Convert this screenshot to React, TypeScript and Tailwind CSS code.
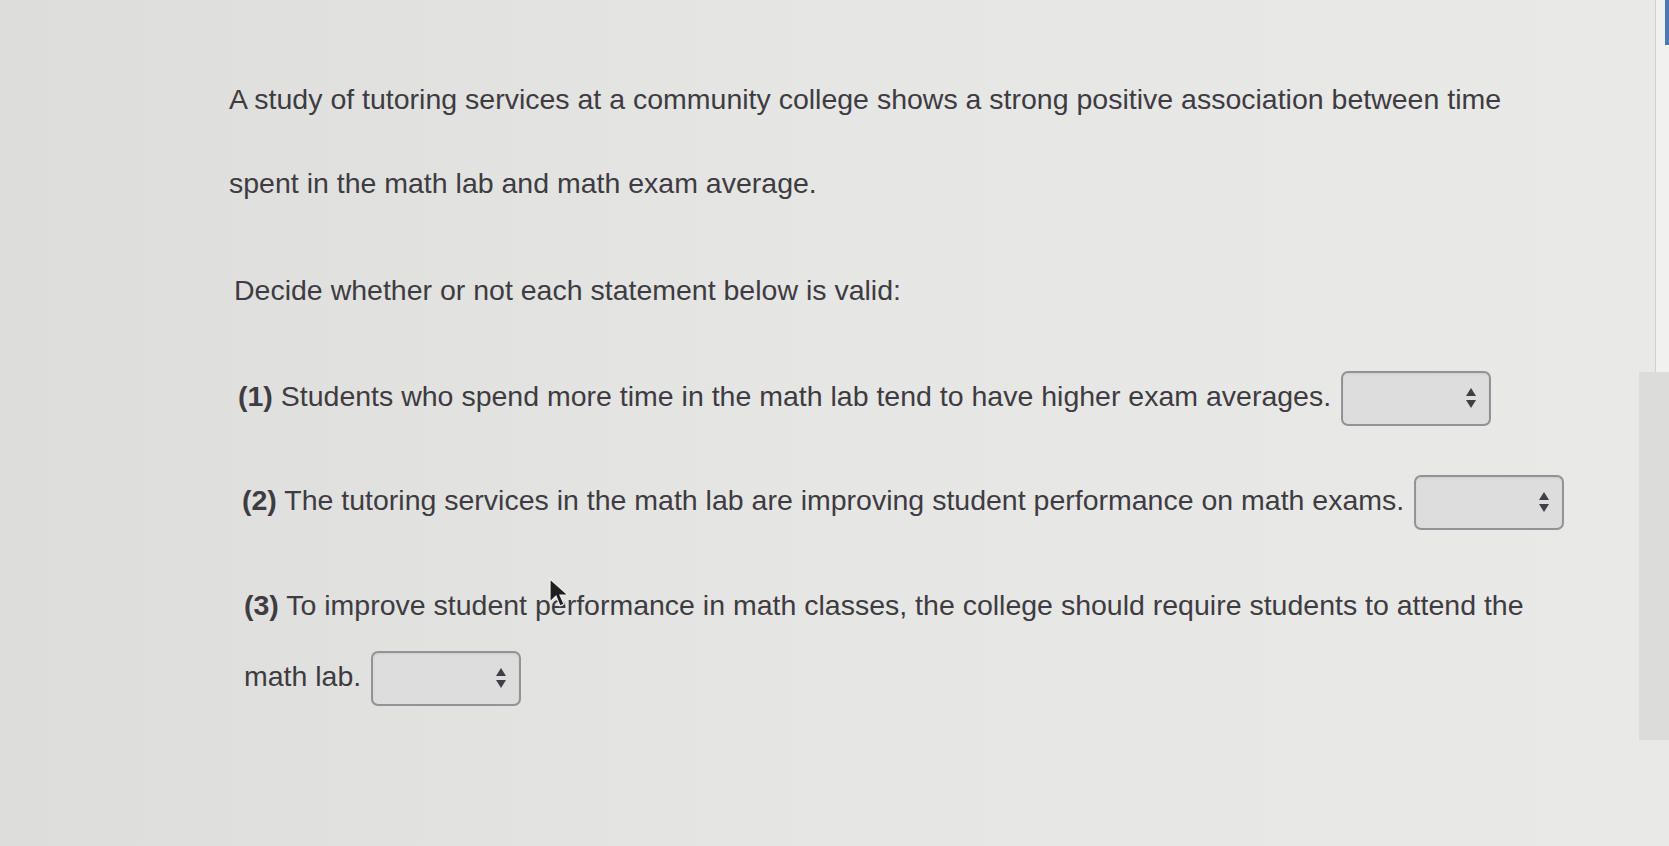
import React from "react";

function Select({ className = "" }: { className?: string }) {
  return (
    <span
      className={
        "inline-flex h-[55px] w-[150px] items-center justify-end rounded-[7px] border-2 border-[#939397] bg-[#dddddd] pr-[12px] align-middle shadow-[inset_0_1px_2px_rgba(0,0,0,0.08)] " +
        className
      }
    >
      <svg width="12" height="22" viewBox="0 0 12 22">
        <path d="M6 1 L11 9 L1 9 Z" fill="#3f3f45" />
        <path d="M6 21 L11 13 L1 13 Z" fill="#3f3f45" />
      </svg>
    </span>
  );
}

export default function App() {
  return (
    <div
      className="relative flex min-h-screen overflow-hidden bg-gradient-to-r from-[#dddddb] via-[#e6e6e4] to-[#e9e9e7] text-[28.5px] text-[#3e3c42]"
      style={{ fontFamily: '"Liberation Sans", Arial, sans-serif' }}
    >
      <main className="flex-1 pl-[229px] pt-[57px]">
        <p className="max-w-[1300px] leading-[84px]">
          A study of tutoring services at a community college shows a strong positive association between time spent in
          the math lab and math exam average.
        </p>

        <p className="mt-[23px] ml-[5px] leading-[84px]">Decide whether or not each statement below is valid:</p>

        <p className="mt-[22px] ml-[9px] leading-[84px]">
          <span className="font-bold">(1)</span> Students who spend more time in the math lab tend to have higher exam
          averages. <Select className="ml-[2px]" />
        </p>

        <p className="mt-[20px] ml-[13px] leading-[84px]">
          <span className="font-bold">(2)</span> The tutoring services in the math lab are improving student performance
          on math exams. <Select className="ml-[2px]" />
        </p>

        <div className="mt-[28px] ml-[15px] leading-[71px]">
          <p>
            <span className="font-bold">(3)</span> To improve student performance in math classes, the college should
            require students to attend the
          </p>
          <p>
            math lab. <Select className="ml-[2px] w-[143px]" />
          </p>
        </div>
      </main>

      <aside className="flex w-[30px] flex-col">
        <div className="flex h-[372px] justify-end">
          <div className="flex w-[14px] flex-col border-l border-[#cfcfcf] bg-[#f1f1f0]">
            <div className="ml-auto h-[45px] w-[4px] bg-[#4a78b8]" />
          </div>
        </div>
        <div className="h-[368px] bg-[#dcdcdb]" />
      </aside>

      <svg
        className="pointer-events-none absolute left-[549px] top-[578px]"
        width="22"
        height="32"
        viewBox="0 0 22 32"
      >
        <path d="M1 1 L1 24 L7 18 L11 28 L15 26 L11 17 L19 17 Z" fill="#1f1f22" stroke="#eeeeee" strokeWidth="1.2" />
      </svg>
    </div>
  );
}
